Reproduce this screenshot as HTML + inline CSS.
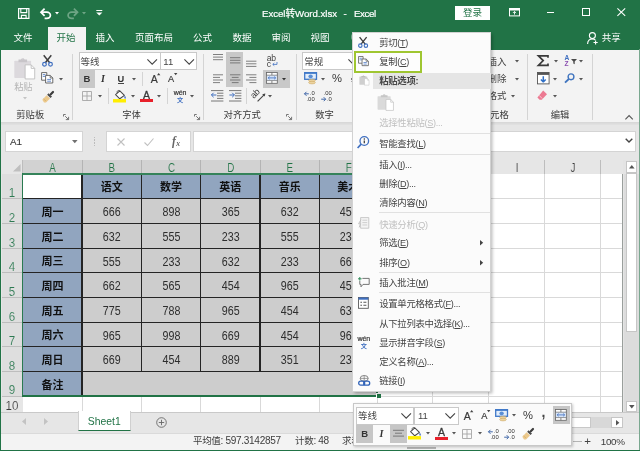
<!DOCTYPE html>
<html lang="zh-CN"><head><meta charset="utf-8"><title>Excel转Word.xlsx - Excel</title>
<style>
html,body{margin:0;padding:0;}
body{width:640px;height:451px;position:relative;overflow:hidden;background:#fff;font-family:"Liberation Sans","Noto Sans CJK SC",sans-serif;}
#app{position:absolute;left:0;top:0;width:640px;height:451px;overflow:hidden;will-change:transform;}
.t{position:absolute;white-space:nowrap;}
.b{position:absolute;box-sizing:border-box;}
.i{position:absolute;overflow:visible;}
u{text-decoration:underline;text-underline-offset:0.6px;text-decoration-thickness:0.7px;}
.clip{position:absolute;overflow:hidden;}
.si{font-family:'Liberation Serif',serif;font-style:italic;}
.sb{font-weight:bold;}
</style></head>
<body>
<div id="app">
<div class="b " style="left:0px;top:0px;width:640px;height:49.5px;background:#217346;"></div>
<div class="b " style="left:0px;top:49.5px;width:640px;height:73.5px;background:#f3f3f3;"></div>
<div class="b " style="left:0px;top:123px;width:640px;height:37px;background:#e6e6e6;"></div>
<div class="b " style="left:0px;top:121.6px;width:640px;height:3px;background:linear-gradient(#d6d6d6,#e2e2e2);"></div>
<div class="b " style="left:0px;top:160px;width:640px;height:252px;background:#e6e6e6;"></div>
<div class="b " style="left:0px;top:412px;width:640px;height:21px;background:#e6e6e6;"></div>
<div class="b " style="left:0px;top:433px;width:640px;height:18px;background:#f3f3f3;"></div>
<div class="b " style="left:0px;top:433px;width:640px;height:1px;background:#dadada;"></div>
<div class="t " style="left:262px;top:5.6px;font-size:9.7px;line-height:15px;height:15px;color:#fff;letter-spacing:-0.05px;-webkit-text-stroke:0.2px #fff;">Excel转Word.xlsx</div>
<div class="t " style="left:343.6px;top:5.6px;font-size:9.7px;line-height:15px;height:15px;color:#fff;-webkit-text-stroke:0.2px #fff;">-</div>
<div class="t " style="left:354px;top:5.6px;font-size:9.7px;line-height:15px;height:15px;color:#fff;letter-spacing:-0.4px;-webkit-text-stroke:0.2px #fff;">Excel</div>
<div class="b " style="left:455px;top:5.5px;width:35px;height:14.5px;background:#fff;"></div>
<div class="t " style="left:455px;top:5.7px;font-size:9.5px;line-height:14.5px;height:14.5px;color:#217346;width:35px;text-align:center;">登录</div>
<svg class="i" style="left:17.5px;top:8px;" width="11.5" height="11" viewBox="0 0 11.5 11"><path d="M0.6 0.6h10.3v9.8h-10.3z" fill="none" stroke="#fff" stroke-width="1.2"/><path d="M2.8 0.6v4h5.9v-4" fill="none" stroke="#fff" stroke-width="1.1"/><path d="M3.4 10.4v-3h4.7v3" fill="none" stroke="#fff" stroke-width="1.1"/></svg>
<svg class="i" style="left:40px;top:8px;" width="11.5" height="10.6" viewBox="0 0 11.5 10.6"><path d="M1.2 4.2h5.6a3.6 3.1 0 0 1 0 6.2h-2.2" fill="none" stroke="#fff" stroke-width="1.75"/><path d="M4.6 0.6l-3.6 3.6l3.6 3.6" fill="none" stroke="#fff" stroke-width="1.75"/></svg>
<svg class="i" style="left:55px;top:12.3px;" width="4" height="2.4" viewBox="0 0 4 2.4"><path d="M0 0h4l-2 2.4z" fill="#fff"/></svg>
<svg class="i" style="left:67px;top:8px;" width="11.5" height="10.6" viewBox="0 0 11.5 10.6"><path d="M10.3 4.2h-5.6a3.6 3.1 0 0 0 0 6.2h2.2" fill="none" stroke="#6ea585" stroke-width="1.75"/><path d="M6.9 0.6l3.6 3.6l-3.6 3.6" fill="none" stroke="#6ea585" stroke-width="1.75"/></svg>
<svg class="i" style="left:82.2px;top:12.3px;" width="4" height="2.4" viewBox="0 0 4 2.4"><path d="M0 0h4l-2 2.4z" fill="#6ea585"/></svg>
<svg class="i" style="left:96px;top:10.4px;" width="6.6" height="5.6" viewBox="0 0 6.6 5.6"><path d="M0.3 0.5h6" stroke="#fff" stroke-width="1"/><path d="M0.2 2.4h6.2l-3.1 3.2z" fill="#fff"/></svg>
<svg class="i" style="left:509.2px;top:8.2px;" width="11" height="8.4" viewBox="0 0 11 8.4"><rect x="0.5" y="0.5" width="10" height="7.4" fill="none" stroke="#fff" stroke-width="1"/><rect x="0.5" y="0.5" width="10" height="2" fill="#fff"/><path d="M5.5 3.6v3M5.5 3.4l-1.6 1.6M5.5 3.4l1.6 1.6" stroke="#fff" stroke-width="0.9" fill="none"/></svg>
<div class="b " style="left:547px;top:12.2px;width:7.4px;height:1.1px;background:#fff;"></div>
<div class="b " style="left:582px;top:8.2px;width:8.3px;height:8.3px;border:1.1px solid #fff;"></div>
<svg class="i" style="left:617px;top:8.4px;" width="8.6" height="8.2" viewBox="0 0 8.6 8.2"><path d="M0.4 0.4l7.8 7.4M8.2 0.4l-7.8 7.4" stroke="#fff" stroke-width="1.1"/></svg>
<svg class="i" style="left:587px;top:32.2px;" width="11" height="13" viewBox="0 0 11 13"><circle cx="5.4" cy="3.6" r="3" fill="none" stroke="#fff" stroke-width="1.1"/><path d="M0.6 12c0-3.4 2-5 4.8-5c1.2 0 2.2 0.4 3 1" fill="none" stroke="#fff" stroke-width="1.1"/><path d="M8.6 8.4v4.2M6.5 10.5h4.2" stroke="#fff" stroke-width="1.1"/></svg>
<div class="b " style="left:47.8px;top:26.8px;width:38px;height:23px;background:#f3f3f3;"></div>
<div class="t " style="left:-7px;top:30.2px;font-size:9.5px;line-height:15px;height:15px;color:#fff;width:60px;text-align:center;">文件</div>
<div class="t " style="left:36px;top:30.2px;font-size:9.5px;line-height:15px;height:15px;color:#217346;width:60px;text-align:center;">开始</div>
<div class="t " style="left:75px;top:30.2px;font-size:9.5px;line-height:15px;height:15px;color:#fff;width:60px;text-align:center;">插入</div>
<div class="t " style="left:124px;top:30.2px;font-size:9.5px;line-height:15px;height:15px;color:#fff;width:60px;text-align:center;">页面布局</div>
<div class="t " style="left:172.5px;top:30.2px;font-size:9.5px;line-height:15px;height:15px;color:#fff;width:60px;text-align:center;">公式</div>
<div class="t " style="left:212px;top:30.2px;font-size:9.5px;line-height:15px;height:15px;color:#fff;width:60px;text-align:center;">数据</div>
<div class="t " style="left:251px;top:30.2px;font-size:9.5px;line-height:15px;height:15px;color:#fff;width:60px;text-align:center;">审阅</div>
<div class="t " style="left:290px;top:30.2px;font-size:9.5px;line-height:15px;height:15px;color:#fff;width:60px;text-align:center;">视图</div>
<div class="b " style="left:350.6px;top:34px;width:2.4px;height:6px;background:rgba(255,255,255,0.35);border-radius:2px 0 0 2px;"></div>
<div class="t " style="left:601.8px;top:30.2px;font-size:9.5px;line-height:15px;height:15px;color:#fff;">共享</div>
<svg class="i" style="left:14px;top:55px;" width="21" height="26" viewBox="0 0 21.5 26"><rect x="0.3" y="5.6" width="17.2" height="17.6" rx="0.8" fill="#dcd9dd"/><path d="M4.6 7v-2.6h2.6a1.9 1.9 0 0 1 3.6 0h2.6v2.6z" fill="#c8c5c9"/><circle cx="9" cy="3.6" r="0.8" fill="#dcd9dd"/><path d="M11.4 9.8h6.2l3.6 3.6v10.8h-9.8z" fill="#fff" stroke="#bdbdbd" stroke-width="0.9"/><path d="M17.6 9.8v3.6h3.6" fill="none" stroke="#bdbdbd" stroke-width="0.9"/></svg>
<div class="t " style="left:14.2px;top:80.9px;font-size:9.2px;line-height:12px;height:12px;color:#b6b6b6;">粘贴</div>
<svg class="i" style="left:22.5px;top:96.5px;" width="4" height="2.4" viewBox="0 0 4 2.4"><path d="M0 0h4l-2 2.4z" fill="#c4c4c4"/></svg>
<svg class="i" style="left:42.3px;top:54.8px;" width="11" height="11.5" viewBox="0 0 11 11.5"><path d="M1.7 0.2L7.9 8.0M9.3 0.2L3.1 8.0" stroke="#3c3c3c" stroke-width="1.45" fill="none"/><circle cx="2.5" cy="9.3" r="1.85" fill="none" stroke="#3f6fc0" stroke-width="1.2"/><circle cx="8.5" cy="9.3" r="1.85" fill="none" stroke="#3f6fc0" stroke-width="1.2"/></svg>
<svg class="i" style="left:41px;top:72.4px;" width="12.5" height="11.5" viewBox="0 0 12.5 11.5"><path d="M0.6 0.6h5.2v7.6h-5.2z" fill="#fff" stroke="#5a5a5a" stroke-width="0.9"/><path d="M1.8 2.6h2.6M1.8 4.4h2.6" stroke="#3f6fc0" stroke-width="0.8"/><path d="M4.6 3.4h4.6l2.6 2.6v5h-7.2z" fill="#fff" stroke="#5a5a5a" stroke-width="0.9"/><path d="M9.2 3.4v2.6h2.6" fill="none" stroke="#5a5a5a" stroke-width="0.8"/><path d="M6.2 7.4h3.8M6.2 9.2h3.8" stroke="#3f6fc0" stroke-width="0.8"/></svg>
<svg class="i" style="left:58.6px;top:77.6px;" width="4" height="2.4" viewBox="0 0 4 2.4"><path d="M0 0h4l-2 2.4z" fill="#555"/></svg>
<svg class="i" style="left:42.3px;top:90.6px;" width="12" height="11.5" viewBox="0 0 12 11.5"><path d="M11 1l-2.2 2.2" stroke="#3c3c3c" stroke-width="2.2" stroke-linecap="round"/><path d="M6.6 2.2l3.4 3.4l-1.5 1.5l-3.4-3.4z" fill="#4a4a4a"/><path d="M4.6 4.2l3.4 3.4l-4 3.8h-2l-1.7-2.6z" fill="#ecc98c"/><path d="M2.4 8.6l1.5 1.5M1.5 7.6l0.8 0.8" stroke="#c9a15a" stroke-width="0.6"/></svg>
<div class="t " style="left:16.3px;top:109.2px;font-size:9.3px;line-height:12px;height:12px;color:#3a3a3a;">剪贴板</div>
<svg class="i" style="left:63px;top:113.5px;" width="6.5" height="6" viewBox="0 0 6.5 6"><path d="M0.5 2.5v-2h2.2M2.2 2.2l3.3 3.3M5.6 2.8v2.8h-2.8" stroke="#666" stroke-width="0.9" fill="none"/></svg>
<div class="b " style="left:71.5px;top:54px;width:1px;height:65.5px;background:#d4d4d4;"></div>
<div class="b " style="left:78.5px;top:52px;width:82px;height:17.5px;background:#fff;border:1px solid #c9c9c9;"></div>
<div class="b " style="left:160px;top:52px;width:37px;height:17.5px;background:#fff;border:1px solid #c9c9c9;"></div>
<div class="t " style="left:80.5px;top:56px;font-size:9.5px;line-height:12px;height:12px;color:#444;">等线</div>
<svg class="i" style="left:146.8px;top:58.8px;" width="10.4" height="5.6" viewBox="0 0 10.4 5.6"><path d="M0.4 0.4l4.8 4.8l4.8 -4.8" stroke="#444" stroke-width="1.1" fill="none"/></svg>
<div class="t " style="left:163.3px;top:56px;font-size:9.5px;line-height:12px;height:12px;color:#444;">11</div>
<svg class="i" style="left:184.3px;top:58.8px;" width="10.4" height="5.6" viewBox="0 0 10.4 5.6"><path d="M0.4 0.4l4.8 4.8l4.8 -4.8" stroke="#444" stroke-width="1.1" fill="none"/></svg>
<div class="b " style="left:78.8px;top:69.5px;width:16.4px;height:18px;background:#c8c8c8;"></div>
<div class="t " style="left:78.8px;top:72.5px;font-size:9.5px;line-height:12px;height:12px;color:#333;width:16.4px;text-align:center;font-weight:bold;">B</div>
<div class="t si sb" style="left:96px;top:72.5px;font-size:10px;line-height:12px;height:12px;color:#333;width:14px;text-align:center;">I</div>
<div class="t " style="left:113.8px;top:72.5px;font-size:9.3px;line-height:12px;height:12px;color:#333;width:14px;text-align:center;font-weight:bold;">U</div>
<div class="b " style="left:118px;top:82.6px;width:5.8px;height:0.9px;background:#444;"></div>
<svg class="i" style="left:132.2px;top:77.6px;" width="4" height="2.4" viewBox="0 0 4 2.4"><path d="M0 0h4l-2 2.4z" fill="#555"/></svg>
<div class="b " style="left:141.8px;top:72px;width:1px;height:14px;background:#d4d4d4;"></div>
<div class="t " style="left:150.8px;top:73.8px;font-size:10.5px;line-height:10px;height:10px;color:#3a3a3a;-webkit-text-stroke:0.2px #3a3a3a;">A</div>
<svg class="i" style="left:157px;top:73.2px;" width="3.4" height="2.2" viewBox="0 0 3.4 2.2"><path d="M0 2.2h3.4l-1.7-2.2z" fill="#444"/></svg>
<div class="t " style="left:168px;top:75.4px;font-size:9.2px;line-height:9px;height:9px;color:#3a3a3a;-webkit-text-stroke:0.2px #3a3a3a;">A</div>
<svg class="i" style="left:173.8px;top:73px;" width="3.4" height="2.2" viewBox="0 0 3.4 2.2"><path d="M0 0h3.4l-1.7 2.2z" fill="#444"/></svg>
<svg class="i" style="left:82px;top:91px;" width="10" height="10" viewBox="0 0 10 10"><path d="M0.5 0.5h9v9h-9zM5 0.5v9M0.5 5h9" stroke="#a6a6a6" stroke-width="0.9" fill="none"/></svg>
<svg class="i" style="left:97.8px;top:95.4px;" width="4" height="2.4" viewBox="0 0 4 2.4"><path d="M0 0h4l-2 2.4z" fill="#555"/></svg>
<div class="b " style="left:107.8px;top:88px;width:1px;height:16px;background:#d4d4d4;"></div>
<svg class="i" style="left:113.3px;top:90px;" width="13" height="12.6" viewBox="0 0 13 12.6"><path d="M2.6 4.6l4.2-3.8l4.6 4.6l-4.6 3.4z" fill="#fff" stroke="#484848" stroke-width="1.05" stroke-linejoin="round"/><path d="M4.4 3.0c-0.9-2.0 1.0-3.4 2.6-1.8" fill="none" stroke="#484848" stroke-width="0.9"/><path d="M11.7 5.6c1.2 1.5 1.5 2.6 0.7 3.1c-0.9 0.4-1.5-0.7-0.7-3.1z" fill="#3f6fc0"/><rect x="0" y="9.1" width="13" height="3.4" fill="#ffee00"/></svg>
<svg class="i" style="left:131.4px;top:95.4px;" width="4" height="2.4" viewBox="0 0 4 2.4"><path d="M0 0h4l-2 2.4z" fill="#555"/></svg>
<div class="t " style="left:142.9px;top:90px;font-size:10.5px;line-height:10px;height:10px;color:#3a3a3a;-webkit-text-stroke:0.3px #3a3a3a;">A</div>
<div class="b " style="left:140px;top:99.2px;width:12.6px;height:3.2px;background:#e8202a;"></div>
<svg class="i" style="left:157.4px;top:95.4px;" width="4" height="2.4" viewBox="0 0 4 2.4"><path d="M0 0h4l-2 2.4z" fill="#555"/></svg>
<div class="b " style="left:167px;top:88px;width:1px;height:16px;background:#d4d4d4;"></div>
<div class="t " style="left:173.8px;top:89px;font-size:7px;line-height:8px;height:8px;color:#333;width:12.5px;text-align:center;-webkit-text-stroke:0.2px #333;letter-spacing:-0.1px;">wén</div>
<div class="t " style="left:173.8px;top:96px;font-size:6.2px;line-height:8px;height:8px;color:#3f6fc0;width:12.5px;text-align:center;font-weight:bold;">文</div>
<svg class="i" style="left:190.3px;top:95.4px;" width="4" height="2.4" viewBox="0 0 4 2.4"><path d="M0 0h4l-2 2.4z" fill="#555"/></svg>
<div class="t " style="left:122.3px;top:109.2px;font-size:9.3px;line-height:12px;height:12px;color:#3a3a3a;">字体</div>
<svg class="i" style="left:194px;top:113.5px;" width="6.5" height="6" viewBox="0 0 6.5 6"><path d="M0.5 2.5v-2h2.2M2.2 2.2l3.3 3.3M5.6 2.8v2.8h-2.8" stroke="#666" stroke-width="0.9" fill="none"/></svg>
<div class="b " style="left:202.5px;top:54px;width:1px;height:65.5px;background:#d4d4d4;"></div>
<div class="b " style="left:226.4px;top:52.4px;width:16.8px;height:35.1px;background:#c8c8c8;"></div>
<div class="b " style="left:262.8px;top:70px;width:26.8px;height:17.5px;background:#c8c8c8;"></div>
<svg class="i" style="left:212.8px;top:50px;" width="14" height="14" viewBox="0 0 14 14"><path d="M0 4.5h10M0 7.1h10M0 9.7h10" stroke="#6a6a6a" stroke-width="0.85" fill="none"/></svg>
<svg class="i" style="left:229.6px;top:50px;" width="14" height="14" viewBox="0 0 14 14"><path d="M0 7.7h10.4M0 10.3h10.4M0 12.9h10.4" stroke="#6a6a6a" stroke-width="0.85" fill="none"/></svg>
<svg class="i" style="left:246.4px;top:54px;" width="14" height="14" viewBox="0 0 14 14"><path d="M0 7.2h10.4M0 9.8h10.4M0 12.4h10.4" stroke="#6a6a6a" stroke-width="0.85" fill="none"/></svg>
<svg class="i" style="left:212.8px;top:70px;" width="14" height="14" viewBox="0 0 14 14"><path d="M0 4.8h10M0 7.4h7M0 10h10M0 12.6h7" stroke="#6a6a6a" stroke-width="0.85" fill="none"/></svg>
<svg class="i" style="left:229.6px;top:70px;" width="14" height="14" viewBox="0 0 14 14"><path d="M0 4.8h10.4M1.8 7.4h6.8M0 10h10.4M1.8 12.6h6.8" stroke="#6a6a6a" stroke-width="0.85" fill="none"/></svg>
<svg class="i" style="left:246.4px;top:70px;" width="14" height="14" viewBox="0 0 14 14"><path d="M0 4.8h10.4M3.4 7.4h7M0 10h10.4M3.4 12.6h7" stroke="#6a6a6a" stroke-width="0.85" fill="none"/></svg>
<div class="t " style="left:266.8px;top:54.2px;font-size:8.6px;line-height:8px;height:8px;color:#444;letter-spacing:-0.3px;">ab</div>
<div class="t " style="left:266.8px;top:59.8px;font-size:8.6px;line-height:8px;height:8px;color:#444;">c</div>
<svg class="i" style="left:271.6px;top:62.2px;" width="5.4" height="4.2" viewBox="0 0 5.4 4.2"><path d="M5 0v2.4h-4.2M0.8 2.4l1.5-1.4M0.8 2.4l1.5 1.4" stroke="#3f6fc0" stroke-width="0.8" fill="none"/></svg>
<svg class="i" style="left:265.5px;top:72.2px;" width="11.8" height="11.8" viewBox="0 0 11.8 11.8"><rect x="0.5" y="0.5" width="10.8" height="10.8" fill="#fff" stroke="#686868" stroke-width="0.85"/><path d="M5.9 0.5v2.6M5.9 8.7v2.6" stroke="#686868" stroke-width="0.8"/><rect x="0.9" y="3.3" width="10" height="5.2" fill="#d6e4f7"/><path d="M0.5 3.2h10.8M0.5 8.6h10.8" stroke="#686868" stroke-width="0.7"/><path d="M2.2 5.9h7.4M2.2 5.9l1.4-1.3M2.2 5.9l1.4 1.3M9.6 5.9l-1.4-1.3M9.6 5.9l-1.4 1.3" stroke="#3f6fc0" stroke-width="0.8" fill="none"/></svg>
<svg class="i" style="left:281.9px;top:77.6px;" width="4" height="2.4" viewBox="0 0 4 2.4"><path d="M0 0h4l-2 2.4z" fill="#333"/></svg>
<svg class="i" style="left:211.4px;top:86px;" width="14" height="14" viewBox="0 0 14 14"><path d="M0 4.6h12.4M6 7.2h6.4M6 9.8h6.4M6 12.4h6.4M0 15h12.4" stroke="#6a6a6a" stroke-width="0.9" fill="none"/></svg>
<svg class="i" style="left:211.4px;top:92px;" width="6" height="6" viewBox="0 0 6 6"><path d="M0.4 3h5M0.4 3l2.2-2.2M0.4 3l2.2 2.2" stroke="#3f6fc0" stroke-width="1" fill="none"/></svg>
<svg class="i" style="left:228.6px;top:86px;" width="14" height="14" viewBox="0 0 14 14"><path d="M0 4.6h12.4M6 7.2h6.4M6 9.8h6.4M6 12.4h6.4M0 15h12.4" stroke="#6a6a6a" stroke-width="0.9" fill="none"/></svg>
<svg class="i" style="left:228.6px;top:92px;" width="6" height="6" viewBox="0 0 6 6"><path d="M0.4 3h5M5.4 3l-2.2-2.2M5.4 3l-2.2 2.2" stroke="#3f6fc0" stroke-width="1" fill="none"/></svg>
<div class="b " style="left:246.3px;top:88px;width:1px;height:16px;background:#d4d4d4;"></div>
<div class="t" style="left:252.2px;top:89.4px;font-size:9px;line-height:9px;color:#3a3a3a;transform:rotate(-45deg);transform-origin:4.5px 6.5px;letter-spacing:-0.3px;">ab</div>
<svg class="i" style="left:257.4px;top:93.2px;" width="9" height="9" viewBox="0 0 9 9"><path d="M0.6 8.4l7.2-7.2" stroke="#444" stroke-width="1.1" fill="none"/><path d="M8.4 0.4l-3.2 0.8l2.4 2.4z" fill="#444"/></svg>
<svg class="i" style="left:268px;top:95.4px;" width="4" height="2.4" viewBox="0 0 4 2.4"><path d="M0 0h4l-2 2.4z" fill="#555"/></svg>
<div class="t " style="left:223.6px;top:109.2px;font-size:9.3px;line-height:12px;height:12px;color:#3a3a3a;">对齐方式</div>
<svg class="i" style="left:286.3px;top:113.5px;" width="6.5" height="6" viewBox="0 0 6.5 6"><path d="M0.5 2.5v-2h2.2M2.2 2.2l3.3 3.3M5.6 2.8v2.8h-2.8" stroke="#666" stroke-width="0.9" fill="none"/></svg>
<div class="b " style="left:295.5px;top:54px;width:1px;height:65.5px;background:#d4d4d4;"></div>
<div class="b " style="left:302px;top:52px;width:70px;height:17.5px;background:#fff;border:1px solid #c9c9c9;"></div>
<div class="t " style="left:304.3px;top:56px;font-size:9.5px;line-height:12px;height:12px;color:#444;">常规</div>
<svg class="i" style="left:348.3px;top:58.8px;" width="10.4" height="5.6" viewBox="0 0 10.4 5.6"><path d="M0.4 0.4l4.8 4.8l4.8 -4.8" stroke="#444" stroke-width="1.1" fill="none"/></svg>
<svg class="i" style="left:304px;top:72px;" width="13.2" height="12.3" viewBox="0 0 13.2 12.3"><rect x="0.7" y="0.7" width="11.8" height="6.6" fill="#e3eefb" stroke="#3f78c8" stroke-width="1.3"/><rect x="0.2" y="0.2" width="12.8" height="1.6" fill="#3f78c8"/><ellipse cx="6.6" cy="4.4" rx="2.2" ry="1.8" fill="#5a8fd6"/><ellipse cx="8" cy="8.6" rx="3.4" ry="1.3" fill="#ecd3a0" stroke="#c9a15a" stroke-width="0.5"/><ellipse cx="8" cy="10.6" rx="3.4" ry="1.3" fill="#ecd3a0" stroke="#c9a15a" stroke-width="0.5"/></svg>
<svg class="i" style="left:321.4px;top:77.6px;" width="4" height="2.4" viewBox="0 0 4 2.4"><path d="M0 0h4l-2 2.4z" fill="#555"/></svg>
<div class="t " style="left:332px;top:72px;font-size:11.2px;line-height:12px;height:12px;color:#383838;">%</div>
<div class="t " style="left:350.4px;top:70px;font-size:12px;line-height:12px;height:12px;color:#444;font-weight:bold;">,</div>
<svg class="i" style="left:304.4px;top:90.6px;" width="11.4" height="10.6" viewBox="0 0 11.4 10.6"><path d="M0.4 2.8h4.4M0.5 2.8l2-2M0.5 2.8l2 2" stroke="#3f66a8" stroke-width="1.0" fill="none"/><text x="5.8" y="4.3" font-size="5.9" fill="#2e2e2e" style="font-family:&quot;Liberation Sans&quot;,sans-serif">.0</text><text x="2.5" y="10.2" font-size="5.9" fill="#2e2e2e" style="font-family:&quot;Liberation Sans&quot;,sans-serif">.00</text></svg>
<svg class="i" style="left:321.2px;top:90.6px;" width="11.4" height="10.6" viewBox="0 0 11.4 10.6"><text x="2.7" y="4.3" font-size="5.9" fill="#2e2e2e" style="font-family:&quot;Liberation Sans&quot;,sans-serif">.00</text><path d="M0.2 8.2h4.4M4.7 8.2l-2-2M4.7 8.2l-2 2" stroke="#3f66a8" stroke-width="1.0" fill="none"/><text x="6" y="10.2" font-size="5.9" fill="#2e2e2e" style="font-family:&quot;Liberation Sans&quot;,sans-serif">.0</text></svg>
<div class="t " style="left:315.2px;top:109.2px;font-size:9.3px;line-height:12px;height:12px;color:#3a3a3a;">数字</div>
<div class="t " style="left:487.5px;top:55.6px;font-size:9.5px;line-height:12px;height:12px;color:#444;">插入</div>
<svg class="i" style="left:514.6px;top:60.2px;" width="4" height="2.4" viewBox="0 0 4 2.4"><path d="M0 0h4l-2 2.4z" fill="#555"/></svg>
<div class="t " style="left:487.5px;top:73px;font-size:9.5px;line-height:12px;height:12px;color:#444;">删除</div>
<svg class="i" style="left:514.6px;top:77.6px;" width="4" height="2.4" viewBox="0 0 4 2.4"><path d="M0 0h4l-2 2.4z" fill="#555"/></svg>
<div class="t " style="left:487.5px;top:90.4px;font-size:9.5px;line-height:12px;height:12px;color:#444;">格式</div>
<svg class="i" style="left:510.6px;top:95.4px;" width="4" height="2.4" viewBox="0 0 4 2.4"><path d="M0 0h4l-2 2.4z" fill="#555"/></svg>
<div class="t " style="left:481px;top:109.2px;font-size:9.3px;line-height:12px;height:12px;color:#3a3a3a;">单元格</div>
<div class="b " style="left:526.7px;top:54px;width:1px;height:65.5px;background:#d4d4d4;"></div>
<svg class="i" style="left:536.7px;top:55.2px;" width="12" height="11" viewBox="0 0 12 11"><path d="M11 2.8v-2h-9.6l4.8 4.8l-4.8 4.8h9.6v-2" stroke="#3a3a3a" stroke-width="1.7" fill="none" stroke-linejoin="miter"/></svg>
<svg class="i" style="left:554px;top:60.2px;" width="4" height="2.4" viewBox="0 0 4 2.4"><path d="M0 0h4l-2 2.4z" fill="#555"/></svg>
<div class="t " style="left:564.4px;top:53.6px;font-size:6.6px;line-height:7px;height:7px;color:#3f6fc0;font-weight:bold;">A</div>
<div class="t " style="left:564.6px;top:60.4px;font-size:6.6px;line-height:7px;height:7px;color:#8a4fb0;font-weight:bold;">Z</div>
<svg class="i" style="left:570.8px;top:58.8px;" width="6" height="5.4" viewBox="0 0 6 5.4"><path d="M0 0h6l-2.3 2.4v2.9l-1.4-0.8v-2.1z" fill="#4a4a4a"/></svg>
<svg class="i" style="left:579.2px;top:60.2px;" width="4" height="2.4" viewBox="0 0 4 2.4"><path d="M0 0h4l-2 2.4z" fill="#555"/></svg>
<svg class="i" style="left:536.7px;top:72px;" width="12.6" height="12.4" viewBox="0 0 12.6 12.4"><rect x="0.5" y="0.5" width="11.6" height="11.4" fill="#fff" stroke="#555" stroke-width="0.9"/><rect x="0.5" y="0.5" width="11.6" height="2.4" fill="#555"/><path d="M6.3 4.2v5.6M6.3 10l-2.4-2.4M6.3 10l2.4-2.4" stroke="#2f6fc6" stroke-width="1.5" fill="none"/></svg>
<svg class="i" style="left:552.6px;top:77.6px;" width="4" height="2.4" viewBox="0 0 4 2.4"><path d="M0 0h4l-2 2.4z" fill="#555"/></svg>
<svg class="i" style="left:564.4px;top:73.2px;" width="11" height="10.4" viewBox="0 0 11 10.4"><circle cx="7" cy="3.8" r="2.9" fill="none" stroke="#3f74bf" stroke-width="1.4"/><path d="M4.8 6l-3.8 3.6" stroke="#3f74bf" stroke-width="1.8"/></svg>
<svg class="i" style="left:579.4px;top:77.6px;" width="4" height="2.4" viewBox="0 0 4 2.4"><path d="M0 0h4l-2 2.4z" fill="#555"/></svg>
<svg class="i" style="left:537.4px;top:90.4px;" width="10.4" height="10.4" viewBox="0 0 10.4 10.4"><path d="M6.2 0.4l3.8 3.8l-5.2 5.6h-2.2l-2.2-2.4z" fill="#ec7a92"/><path d="M2.2 5.4l3 3.2" stroke="#f6c6d0" stroke-width="1"/></svg>
<svg class="i" style="left:552.6px;top:95.4px;" width="4" height="2.4" viewBox="0 0 4 2.4"><path d="M0 0h4l-2 2.4z" fill="#555"/></svg>
<div class="t " style="left:550.8px;top:109.2px;font-size:9.3px;line-height:12px;height:12px;color:#3a3a3a;">编辑</div>
<div class="b " style="left:592px;top:54px;width:1px;height:65.5px;background:#d4d4d4;"></div>
<svg class="i" style="left:625.3px;top:114.6px;" width="8.2" height="4.8" viewBox="0 0 8.2 4.8"><path d="M0.4 4.4l3.7-3.8l3.7 3.8" stroke="#555" stroke-width="1.1" fill="none"/></svg>
<div class="b " style="left:5px;top:130.8px;width:78.4px;height:21.4px;background:#fff;border:1px solid #d4d4d4;"></div>
<div class="t " style="left:10px;top:133.7px;font-size:9.9px;line-height:15px;height:15px;color:#3a3a3a;-webkit-text-stroke:0.15px #3a3a3a;">A1</div>
<svg class="i" style="left:72.2px;top:139.6px;" width="5.6" height="3.4" viewBox="0 0 5.6 3.4"><path d="M0 0h5.6l-2.8 3.2z" fill="#707070"/></svg>
<div class="b " style="left:93.8px;top:136.6px;width:1.4px;height:1.4px;background:#bcbcbc;"></div>
<div class="b " style="left:93.8px;top:139.4px;width:1.4px;height:1.4px;background:#bcbcbc;"></div>
<div class="b " style="left:93.8px;top:142.2px;width:1.4px;height:1.4px;background:#bcbcbc;"></div>
<div class="b " style="left:93.8px;top:145px;width:1.4px;height:1.4px;background:#bcbcbc;"></div>
<div class="b " style="left:106px;top:130.8px;width:85px;height:21.4px;background:#fff;border:1px solid #d4d4d4;"></div>
<svg class="i" style="left:117px;top:138px;" width="8" height="8" viewBox="0 0 8 8"><path d="M0.5 0.5l7 7M7.5 0.5l-7 7" stroke="#c0c0c0" stroke-width="1.1" fill="none"/></svg>
<svg class="i" style="left:144px;top:138px;" width="10" height="8" viewBox="0 0 10 8"><path d="M0.5 4.5l3 3l6-7" stroke="#c0c0c0" stroke-width="1.1" fill="none"/></svg>
<div class="t si sb" style="left:172px;top:133.6px;font-size:11.6px;line-height:16px;height:16px;color:#666;">f</div>
<div class="t si sb" style="left:176.2px;top:137.8px;font-size:7.6px;line-height:11px;height:11px;color:#666;">x</div>
<div class="b " style="left:193.2px;top:130.8px;width:443px;height:21.4px;background:#fff;border:1px solid #d4d4d4;"></div>
<svg class="i" style="left:625px;top:138px;" width="8" height="5" viewBox="0 0 8 5"><path d="M0.7 0.7l3.3 3.3l3.3-3.3" stroke="#444" stroke-width="1.4" fill="none"/></svg>
<div class="b " style="left:2px;top:174px;width:621px;height:238px;background:#fff;"></div>
<div class="b " style="left:2px;top:160px;width:621px;height:14px;background:#e6e6e6;"></div>
<div class="b " style="left:22px;top:160px;width:355px;height:14px;background:#d2d2d2;"></div>
<div class="t " style="left:23px;top:160.8px;font-size:12px;line-height:15px;height:15px;color:#217346;width:59px;text-align:center;transform:scaleX(0.82);-webkit-text-stroke:0.15px #d2d2d2;">A</div>
<div class="b " style="left:81.5px;top:160px;width:1px;height:14px;background:#b4b4b4;"></div>
<div class="t " style="left:82px;top:160.8px;font-size:12px;line-height:15px;height:15px;color:#217346;width:59.5px;text-align:center;transform:scaleX(0.82);-webkit-text-stroke:0.15px #d2d2d2;">B</div>
<div class="b " style="left:141px;top:160px;width:1px;height:14px;background:#b4b4b4;"></div>
<div class="t " style="left:141.5px;top:160.8px;font-size:12px;line-height:15px;height:15px;color:#217346;width:59px;text-align:center;transform:scaleX(0.82);-webkit-text-stroke:0.15px #d2d2d2;">C</div>
<div class="b " style="left:200px;top:160px;width:1px;height:14px;background:#b4b4b4;"></div>
<div class="t " style="left:200.5px;top:160.8px;font-size:12px;line-height:15px;height:15px;color:#217346;width:59.5px;text-align:center;transform:scaleX(0.82);-webkit-text-stroke:0.15px #d2d2d2;">D</div>
<div class="b " style="left:259.5px;top:160px;width:1px;height:14px;background:#b4b4b4;"></div>
<div class="t " style="left:260px;top:160.8px;font-size:12px;line-height:15px;height:15px;color:#217346;width:59.5px;text-align:center;transform:scaleX(0.82);-webkit-text-stroke:0.15px #d2d2d2;">E</div>
<div class="b " style="left:319px;top:160px;width:1px;height:14px;background:#b4b4b4;"></div>
<div class="t " style="left:319.5px;top:160.8px;font-size:12px;line-height:15px;height:15px;color:#217346;width:57.5px;text-align:center;transform:scaleX(0.82);-webkit-text-stroke:0.15px #d2d2d2;">F</div>
<div class="b " style="left:376.5px;top:160px;width:1px;height:14px;background:#bdbdbd;"></div>
<div class="t " style="left:377px;top:160.8px;font-size:12px;line-height:15px;height:15px;color:#3a3a3a;width:55.5px;text-align:center;transform:scaleX(0.82);-webkit-text-stroke:0.15px #e6e6e6;">G</div>
<div class="b " style="left:432px;top:160px;width:1px;height:14px;background:#bdbdbd;"></div>
<div class="t " style="left:432.5px;top:160.8px;font-size:12px;line-height:15px;height:15px;color:#3a3a3a;width:56px;text-align:center;transform:scaleX(0.82);-webkit-text-stroke:0.15px #e6e6e6;">H</div>
<div class="b " style="left:488px;top:160px;width:1px;height:14px;background:#bdbdbd;"></div>
<div class="t " style="left:488.5px;top:160.8px;font-size:12px;line-height:15px;height:15px;color:#3a3a3a;width:56px;text-align:center;transform:scaleX(0.82);-webkit-text-stroke:0.15px #e6e6e6;">I</div>
<div class="b " style="left:544px;top:160px;width:1px;height:14px;background:#bdbdbd;"></div>
<div class="t " style="left:544.5px;top:160.8px;font-size:12px;line-height:15px;height:15px;color:#3a3a3a;width:56px;text-align:center;transform:scaleX(0.82);-webkit-text-stroke:0.15px #e6e6e6;">J</div>
<div class="b " style="left:600px;top:160px;width:1px;height:14px;background:#bdbdbd;"></div>
<div class="b " style="left:659.5px;top:160px;width:1px;height:14px;background:#bdbdbd;"></div>
<div class="b " style="left:21.5px;top:160px;width:1px;height:14px;background:#bdbdbd;"></div>
<svg class="i" style="left:12.6px;top:164px;" width="7.6" height="7.6" viewBox="0 0 7.6 7.6"><path d="M7.6 0v7.6h-7.6z" fill="#bfbfbf"/></svg>
<div class="b " style="left:2px;top:174px;width:20.5px;height:222px;background:#dedede;"></div>
<div class="b " style="left:2px;top:396px;width:20.5px;height:16px;background:#e6e6e6;"></div>
<div class="t " style="left:2px;top:186.1px;font-size:12.6px;line-height:15px;height:15px;color:#2d7a52;width:20px;text-align:center;transform:scaleX(0.92);-webkit-text-stroke:0.15px #dedede;">1</div>
<div class="b " style="left:2px;top:198.2px;width:20.5px;height:1px;background:#bdbdbd;"></div>
<div class="t " style="left:2px;top:210.8px;font-size:12.6px;line-height:15px;height:15px;color:#2d7a52;width:20px;text-align:center;transform:scaleX(0.92);-webkit-text-stroke:0.15px #dedede;">2</div>
<div class="b " style="left:2px;top:222.9px;width:20.5px;height:1px;background:#bdbdbd;"></div>
<div class="t " style="left:2px;top:235.5px;font-size:12.6px;line-height:15px;height:15px;color:#2d7a52;width:20px;text-align:center;transform:scaleX(0.92);-webkit-text-stroke:0.15px #dedede;">3</div>
<div class="b " style="left:2px;top:247.6px;width:20.5px;height:1px;background:#bdbdbd;"></div>
<div class="t " style="left:2px;top:260.2px;font-size:12.6px;line-height:15px;height:15px;color:#2d7a52;width:20px;text-align:center;transform:scaleX(0.92);-webkit-text-stroke:0.15px #dedede;">4</div>
<div class="b " style="left:2px;top:272.3px;width:20.5px;height:1px;background:#bdbdbd;"></div>
<div class="t " style="left:2px;top:284.9px;font-size:12.6px;line-height:15px;height:15px;color:#2d7a52;width:20px;text-align:center;transform:scaleX(0.92);-webkit-text-stroke:0.15px #dedede;">5</div>
<div class="b " style="left:2px;top:297px;width:20.5px;height:1px;background:#bdbdbd;"></div>
<div class="t " style="left:2px;top:309.6px;font-size:12.6px;line-height:15px;height:15px;color:#2d7a52;width:20px;text-align:center;transform:scaleX(0.92);-webkit-text-stroke:0.15px #dedede;">6</div>
<div class="b " style="left:2px;top:321.7px;width:20.5px;height:1px;background:#bdbdbd;"></div>
<div class="t " style="left:2px;top:334.3px;font-size:12.6px;line-height:15px;height:15px;color:#2d7a52;width:20px;text-align:center;transform:scaleX(0.92);-webkit-text-stroke:0.15px #dedede;">7</div>
<div class="b " style="left:2px;top:346.4px;width:20.5px;height:1px;background:#bdbdbd;"></div>
<div class="t " style="left:2px;top:359px;font-size:12.6px;line-height:15px;height:15px;color:#2d7a52;width:20px;text-align:center;transform:scaleX(0.92);-webkit-text-stroke:0.15px #dedede;">8</div>
<div class="b " style="left:2px;top:371.1px;width:20.5px;height:1px;background:#bdbdbd;"></div>
<div class="t " style="left:2px;top:383.4px;font-size:12.6px;line-height:15px;height:15px;color:#2d7a52;width:20px;text-align:center;transform:scaleX(0.92);-webkit-text-stroke:0.15px #dedede;">9</div>
<div class="b " style="left:2px;top:395.5px;width:20.5px;height:1px;background:#bdbdbd;"></div>
<div class="t " style="left:2px;top:399.4px;font-size:12.6px;line-height:15px;height:15px;color:#3a3a3a;width:20px;text-align:center;transform:scaleX(0.92);-webkit-text-stroke:0.15px #e6e6e6;">10</div>
<div class="b " style="left:2px;top:411.5px;width:20.5px;height:1px;background:#bdbdbd;"></div>
<div class="b " style="left:376.5px;top:174px;width:1px;height:238px;background:#d9d9d9;"></div>
<div class="b " style="left:432px;top:174px;width:1px;height:238px;background:#d9d9d9;"></div>
<div class="b " style="left:488px;top:174px;width:1px;height:238px;background:#d9d9d9;"></div>
<div class="b " style="left:544px;top:174px;width:1px;height:238px;background:#d9d9d9;"></div>
<div class="b " style="left:600px;top:174px;width:1px;height:238px;background:#d9d9d9;"></div>
<div class="b " style="left:81.5px;top:396px;width:1px;height:16px;background:#d9d9d9;"></div>
<div class="b " style="left:141px;top:396px;width:1px;height:16px;background:#d9d9d9;"></div>
<div class="b " style="left:200px;top:396px;width:1px;height:16px;background:#d9d9d9;"></div>
<div class="b " style="left:259.5px;top:396px;width:1px;height:16px;background:#d9d9d9;"></div>
<div class="b " style="left:319px;top:396px;width:1px;height:16px;background:#d9d9d9;"></div>
<div class="b " style="left:22px;top:198.2px;width:601px;height:1px;background:#d9d9d9;"></div>
<div class="b " style="left:22px;top:222.9px;width:601px;height:1px;background:#d9d9d9;"></div>
<div class="b " style="left:22px;top:247.6px;width:601px;height:1px;background:#d9d9d9;"></div>
<div class="b " style="left:22px;top:272.3px;width:601px;height:1px;background:#d9d9d9;"></div>
<div class="b " style="left:22px;top:297px;width:601px;height:1px;background:#d9d9d9;"></div>
<div class="b " style="left:22px;top:321.7px;width:601px;height:1px;background:#d9d9d9;"></div>
<div class="b " style="left:22px;top:346.4px;width:601px;height:1px;background:#d9d9d9;"></div>
<div class="b " style="left:22px;top:371.1px;width:601px;height:1px;background:#d9d9d9;"></div>
<div class="b " style="left:22px;top:395.5px;width:601px;height:1px;background:#d9d9d9;"></div>
<div class="b " style="left:22px;top:411.5px;width:601px;height:1px;background:#d9d9d9;"></div>
<div class="b " style="left:82px;top:174px;width:295px;height:24.7px;background:#91a5bf;"></div>
<div class="b " style="left:23px;top:198.7px;width:59px;height:197.3px;background:#91a5bf;"></div>
<div class="b " style="left:82px;top:198.7px;width:295px;height:197.3px;background:#cdcdcd;"></div>
<div class="b " style="left:23px;top:198.1px;width:354px;height:1.2px;background:#242424;"></div>
<div class="b " style="left:23px;top:222.8px;width:354px;height:1.2px;background:#242424;"></div>
<div class="b " style="left:23px;top:247.5px;width:354px;height:1.2px;background:#242424;"></div>
<div class="b " style="left:23px;top:272.2px;width:354px;height:1.2px;background:#242424;"></div>
<div class="b " style="left:23px;top:296.9px;width:354px;height:1.2px;background:#242424;"></div>
<div class="b " style="left:23px;top:321.6px;width:354px;height:1.2px;background:#242424;"></div>
<div class="b " style="left:23px;top:346.3px;width:354px;height:1.2px;background:#242424;"></div>
<div class="b " style="left:23px;top:371px;width:354px;height:1.2px;background:#242424;"></div>
<div class="b " style="left:81.4px;top:174px;width:1.2px;height:197.6px;background:#242424;"></div>
<div class="b " style="left:140.9px;top:174px;width:1.2px;height:197.6px;background:#242424;"></div>
<div class="b " style="left:199.9px;top:174px;width:1.2px;height:197.6px;background:#242424;"></div>
<div class="b " style="left:259.4px;top:174px;width:1.2px;height:197.6px;background:#242424;"></div>
<div class="b " style="left:318.9px;top:174px;width:1.2px;height:197.6px;background:#242424;"></div>
<div class="b " style="left:81.4px;top:371.6px;width:1.2px;height:24.4px;background:#242424;"></div>
<div class="t " style="left:82px;top:179.1px;font-size:11px;line-height:16px;height:16px;color:#111;width:59.5px;text-align:center;font-weight:bold;">语文</div>
<div class="t " style="left:141.5px;top:179.1px;font-size:11px;line-height:16px;height:16px;color:#111;width:59px;text-align:center;font-weight:bold;">数学</div>
<div class="t " style="left:200.5px;top:179.1px;font-size:11px;line-height:16px;height:16px;color:#111;width:59.5px;text-align:center;font-weight:bold;">英语</div>
<div class="t " style="left:260px;top:179.1px;font-size:11px;line-height:16px;height:16px;color:#111;width:59.5px;text-align:center;font-weight:bold;">音乐</div>
<div class="t " style="left:319.5px;top:179.1px;font-size:11px;line-height:16px;height:16px;color:#111;width:57.5px;text-align:center;font-weight:bold;">美术</div>
<div class="t " style="left:23px;top:203.8px;font-size:11px;line-height:16px;height:16px;color:#111;width:59px;text-align:center;font-weight:bold;">周一</div>
<div class="t " style="left:82px;top:204.1px;font-size:12.3px;line-height:16px;height:16px;color:#2e2e2e;width:59.5px;text-align:center;transform:scaleX(0.87);">666</div>
<div class="t " style="left:141.5px;top:204.1px;font-size:12.3px;line-height:16px;height:16px;color:#2e2e2e;width:59px;text-align:center;transform:scaleX(0.87);">898</div>
<div class="t " style="left:200.5px;top:204.1px;font-size:12.3px;line-height:16px;height:16px;color:#2e2e2e;width:59.5px;text-align:center;transform:scaleX(0.87);">365</div>
<div class="t " style="left:260px;top:204.1px;font-size:12.3px;line-height:16px;height:16px;color:#2e2e2e;width:59.5px;text-align:center;transform:scaleX(0.87);">632</div>
<div class="t " style="left:319.5px;top:204.1px;font-size:12.3px;line-height:16px;height:16px;color:#2e2e2e;width:57.5px;text-align:center;transform:scaleX(0.87);">451</div>
<div class="t " style="left:23px;top:228.5px;font-size:11px;line-height:16px;height:16px;color:#111;width:59px;text-align:center;font-weight:bold;">周二</div>
<div class="t " style="left:82px;top:228.8px;font-size:12.3px;line-height:16px;height:16px;color:#2e2e2e;width:59.5px;text-align:center;transform:scaleX(0.87);">632</div>
<div class="t " style="left:141.5px;top:228.8px;font-size:12.3px;line-height:16px;height:16px;color:#2e2e2e;width:59px;text-align:center;transform:scaleX(0.87);">555</div>
<div class="t " style="left:200.5px;top:228.8px;font-size:12.3px;line-height:16px;height:16px;color:#2e2e2e;width:59.5px;text-align:center;transform:scaleX(0.87);">233</div>
<div class="t " style="left:260px;top:228.8px;font-size:12.3px;line-height:16px;height:16px;color:#2e2e2e;width:59.5px;text-align:center;transform:scaleX(0.87);">555</div>
<div class="t " style="left:319.5px;top:228.8px;font-size:12.3px;line-height:16px;height:16px;color:#2e2e2e;width:57.5px;text-align:center;transform:scaleX(0.87);">231</div>
<div class="t " style="left:23px;top:253.2px;font-size:11px;line-height:16px;height:16px;color:#111;width:59px;text-align:center;font-weight:bold;">周三</div>
<div class="t " style="left:82px;top:253.5px;font-size:12.3px;line-height:16px;height:16px;color:#2e2e2e;width:59.5px;text-align:center;transform:scaleX(0.87);">555</div>
<div class="t " style="left:141.5px;top:253.5px;font-size:12.3px;line-height:16px;height:16px;color:#2e2e2e;width:59px;text-align:center;transform:scaleX(0.87);">233</div>
<div class="t " style="left:200.5px;top:253.5px;font-size:12.3px;line-height:16px;height:16px;color:#2e2e2e;width:59.5px;text-align:center;transform:scaleX(0.87);">632</div>
<div class="t " style="left:260px;top:253.5px;font-size:12.3px;line-height:16px;height:16px;color:#2e2e2e;width:59.5px;text-align:center;transform:scaleX(0.87);">233</div>
<div class="t " style="left:319.5px;top:253.5px;font-size:12.3px;line-height:16px;height:16px;color:#2e2e2e;width:57.5px;text-align:center;transform:scaleX(0.87);">661</div>
<div class="t " style="left:23px;top:277.9px;font-size:11px;line-height:16px;height:16px;color:#111;width:59px;text-align:center;font-weight:bold;">周四</div>
<div class="t " style="left:82px;top:278.2px;font-size:12.3px;line-height:16px;height:16px;color:#2e2e2e;width:59.5px;text-align:center;transform:scaleX(0.87);">662</div>
<div class="t " style="left:141.5px;top:278.2px;font-size:12.3px;line-height:16px;height:16px;color:#2e2e2e;width:59px;text-align:center;transform:scaleX(0.87);">565</div>
<div class="t " style="left:200.5px;top:278.2px;font-size:12.3px;line-height:16px;height:16px;color:#2e2e2e;width:59.5px;text-align:center;transform:scaleX(0.87);">454</div>
<div class="t " style="left:260px;top:278.2px;font-size:12.3px;line-height:16px;height:16px;color:#2e2e2e;width:59.5px;text-align:center;transform:scaleX(0.87);">965</div>
<div class="t " style="left:319.5px;top:278.2px;font-size:12.3px;line-height:16px;height:16px;color:#2e2e2e;width:57.5px;text-align:center;transform:scaleX(0.87);">451</div>
<div class="t " style="left:23px;top:302.6px;font-size:11px;line-height:16px;height:16px;color:#111;width:59px;text-align:center;font-weight:bold;">周五</div>
<div class="t " style="left:82px;top:302.9px;font-size:12.3px;line-height:16px;height:16px;color:#2e2e2e;width:59.5px;text-align:center;transform:scaleX(0.87);">775</div>
<div class="t " style="left:141.5px;top:302.9px;font-size:12.3px;line-height:16px;height:16px;color:#2e2e2e;width:59px;text-align:center;transform:scaleX(0.87);">788</div>
<div class="t " style="left:200.5px;top:302.9px;font-size:12.3px;line-height:16px;height:16px;color:#2e2e2e;width:59.5px;text-align:center;transform:scaleX(0.87);">965</div>
<div class="t " style="left:260px;top:302.9px;font-size:12.3px;line-height:16px;height:16px;color:#2e2e2e;width:59.5px;text-align:center;transform:scaleX(0.87);">454</div>
<div class="t " style="left:319.5px;top:302.9px;font-size:12.3px;line-height:16px;height:16px;color:#2e2e2e;width:57.5px;text-align:center;transform:scaleX(0.87);">631</div>
<div class="t " style="left:23px;top:327.3px;font-size:11px;line-height:16px;height:16px;color:#111;width:59px;text-align:center;font-weight:bold;">周六</div>
<div class="t " style="left:82px;top:327.6px;font-size:12.3px;line-height:16px;height:16px;color:#2e2e2e;width:59.5px;text-align:center;transform:scaleX(0.87);">965</div>
<div class="t " style="left:141.5px;top:327.6px;font-size:12.3px;line-height:16px;height:16px;color:#2e2e2e;width:59px;text-align:center;transform:scaleX(0.87);">998</div>
<div class="t " style="left:200.5px;top:327.6px;font-size:12.3px;line-height:16px;height:16px;color:#2e2e2e;width:59.5px;text-align:center;transform:scaleX(0.87);">669</div>
<div class="t " style="left:260px;top:327.6px;font-size:12.3px;line-height:16px;height:16px;color:#2e2e2e;width:59.5px;text-align:center;transform:scaleX(0.87);">454</div>
<div class="t " style="left:319.5px;top:327.6px;font-size:12.3px;line-height:16px;height:16px;color:#2e2e2e;width:57.5px;text-align:center;transform:scaleX(0.87);">961</div>
<div class="t " style="left:23px;top:352px;font-size:11px;line-height:16px;height:16px;color:#111;width:59px;text-align:center;font-weight:bold;">周日</div>
<div class="t " style="left:82px;top:352.3px;font-size:12.3px;line-height:16px;height:16px;color:#2e2e2e;width:59.5px;text-align:center;transform:scaleX(0.87);">669</div>
<div class="t " style="left:141.5px;top:352.3px;font-size:12.3px;line-height:16px;height:16px;color:#2e2e2e;width:59px;text-align:center;transform:scaleX(0.87);">454</div>
<div class="t " style="left:200.5px;top:352.3px;font-size:12.3px;line-height:16px;height:16px;color:#2e2e2e;width:59.5px;text-align:center;transform:scaleX(0.87);">889</div>
<div class="t " style="left:260px;top:352.3px;font-size:12.3px;line-height:16px;height:16px;color:#2e2e2e;width:59.5px;text-align:center;transform:scaleX(0.87);">351</div>
<div class="t " style="left:319.5px;top:352.3px;font-size:12.3px;line-height:16px;height:16px;color:#2e2e2e;width:57.5px;text-align:center;transform:scaleX(0.87);">231</div>
<div class="t " style="left:23px;top:376.7px;font-size:11px;line-height:16px;height:16px;color:#111;width:59px;text-align:center;font-weight:bold;">备注</div>
<div class="b " style="left:21.5px;top:173px;width:356.5px;height:1.5px;background:#35835a;"></div>
<div class="b " style="left:21.6px;top:173px;width:1.6px;height:223.5px;background:#2a7a50;"></div>
<div class="b " style="left:21.5px;top:395px;width:356.5px;height:1.6px;background:#217346;"></div>
<div class="b " style="left:376.3px;top:173px;width:1.6px;height:223px;background:#217346;"></div>
<div class="b " style="left:376px;top:393px;width:5px;height:5px;background:#fff;"></div>
<div class="b " style="left:377px;top:394px;width:3.5px;height:3.5px;background:#217346;"></div>
<div class="b " style="left:622.6px;top:160px;width:17.4px;height:252.5px;background:#e4e4e4;"></div>
<div class="b " style="left:622.2px;top:174px;width:0.9px;height:238px;background:#9a9f9c;"></div>
<div class="b " style="left:624px;top:174px;width:14.5px;height:238px;background:#dcdcdc;"></div>
<div class="b " style="left:625.8px;top:161.3px;width:11.2px;height:12px;background:#fff;border:1px solid #c6c6c6;"></div>
<svg class="i" style="left:628.6px;top:165.4px;" width="5.6" height="3.4" viewBox="0 0 5.6 3.4"><path d="M0 3.4h5.6l-2.8-3.4z" fill="#555"/></svg>
<div class="b " style="left:625.8px;top:173.3px;width:11.2px;height:158.6px;background:#fff;border:1px solid #c6c6c6;"></div>
<div class="b " style="left:625.8px;top:401.2px;width:11.2px;height:11px;background:#fff;border:1px solid #c6c6c6;"></div>
<svg class="i" style="left:628.6px;top:405.2px;" width="5.6" height="3.4" viewBox="0 0 5.6 3.4"><path d="M0 0h5.6l-2.8 3.4z" fill="#555"/></svg>
<div class="b " style="left:0px;top:411.5px;width:640px;height:1px;background:#c9c9c9;"></div>
<svg class="i" style="left:22px;top:418px;" width="4" height="7" viewBox="0 0 4 7"><path d="M4 0v7l-4-3.5z" fill="#c3c3c3"/></svg>
<svg class="i" style="left:44px;top:418px;" width="4" height="7" viewBox="0 0 4 7"><path d="M0 0v7l4-3.5z" fill="#c3c3c3"/></svg>
<div class="b " style="left:78px;top:411px;width:52.5px;height:19.5px;background:#fff;border-bottom:1.5px solid #217346;border-left:1px solid #d0d0d0;border-right:1px solid #d0d0d0;"></div>
<div class="t " style="left:78px;top:413.6px;font-size:10.4px;line-height:15px;height:15px;color:#217346;width:52.5px;text-align:center;">Sheet1</div>
<svg class="i" style="left:156px;top:416.5px;" width="11" height="11" viewBox="0 0 11 11"><circle cx="5.5" cy="5.5" r="4.8" fill="none" stroke="#666" stroke-width="0.9"/><path d="M5.5 2.8v5.4M2.8 5.5h5.4" stroke="#666" stroke-width="0.9"/></svg>
<div class="b " style="left:560px;top:417px;width:51px;height:10.6px;background:#d8d8d8;"></div>
<div class="b " style="left:560px;top:417px;width:30.5px;height:10.6px;background:#fff;border:1px solid #c8c8c8;"></div>
<div class="b " style="left:611.2px;top:417px;width:11.5px;height:10.6px;background:#fff;border:1px solid #c6c6c6;"></div>
<svg class="i" style="left:615.6px;top:419.6px;" width="3.4" height="5.6" viewBox="0 0 3.4 5.6"><path d="M0 0v5.6l3.4-2.8z" fill="#555"/></svg>
<div class="t " style="left:193px;top:434.4px;font-size:9.5px;line-height:13px;height:13px;color:#3c3c3c;letter-spacing:-0.32px;">平均值<span style="font-size:10.07px">: 597.3142857</span></div>
<div class="t " style="left:295px;top:434.4px;font-size:9.5px;line-height:13px;height:13px;color:#3c3c3c;letter-spacing:-0.32px;">计数<span style="font-size:10.07px">: 48</span></div>
<div class="t " style="left:342px;top:434.4px;font-size:9.5px;line-height:13px;height:13px;color:#3c3c3c;width:11px;overflow:hidden;">求和: 28671</div>
<div class="t " style="left:584.2px;top:434.2px;font-size:11.5px;line-height:14px;height:14px;color:#444;">+</div>
<div class="t " style="left:600.8px;top:435.4px;font-size:9.9px;line-height:13px;height:13px;color:#3c3c3c;letter-spacing:-0.35px;">100%</div>
<div class="b " style="left:573.4px;top:441.2px;width:8.8px;height:1px;background:#b4b4b4;"></div>
<div class="b " style="left:351.8px;top:31.8px;width:139.2px;height:359.8px;background:#fbfbfb;border:1px solid #d2d2d2;box-shadow:1.5px 1.5px 3px rgba(0,0,0,0.26);"></div>
<svg class="i" style="left:358px;top:36.5px;" width="10.23" height="10.695" viewBox="0 0 11 11.5"><path d="M1.7 0.2L7.9 8.0M9.3 0.2L3.1 8.0" stroke="#3c3c3c" stroke-width="1.45" fill="none"/><circle cx="2.5" cy="9.3" r="1.85" fill="none" stroke="#3f6fc0" stroke-width="1.2"/><circle cx="8.5" cy="9.3" r="1.85" fill="none" stroke="#3f6fc0" stroke-width="1.2"/></svg>
<div class="t " style="left:379.2px;top:35.5px;font-size:9.4px;line-height:13px;height:13px;color:#444;letter-spacing:-0.3px;">剪切<span style="font-size:9.12px">(<u>T</u>)</span></div>
<div class="b " style="left:353.5px;top:51.3px;width:68px;height:21.6px;background:#fdfdfd;border:2.2px solid #9fc631;"></div>
<svg class="i" style="left:357.8px;top:56.4px;" width="11" height="10.12" viewBox="0 0 12.5 11.5"><path d="M0.6 0.6h5.2v7.6h-5.2z" fill="#fff" stroke="#5a5a5a" stroke-width="0.9"/><path d="M1.8 2.6h2.6M1.8 4.4h2.6" stroke="#3f6fc0" stroke-width="0.8"/><path d="M4.6 3.4h4.6l2.6 2.6v5h-7.2z" fill="#fff" stroke="#5a5a5a" stroke-width="0.9"/><path d="M9.2 3.4v2.6h2.6" fill="none" stroke="#5a5a5a" stroke-width="0.8"/><path d="M6.2 7.4h3.8M6.2 9.2h3.8" stroke="#3f6fc0" stroke-width="0.8"/></svg>
<div class="t " style="left:379.2px;top:55.1px;font-size:9.4px;line-height:13px;height:13px;color:#444;letter-spacing:-0.3px;">复制<span style="font-size:9.12px">(<u>C</u>)</span></div>
<div class="b " style="left:373px;top:72.9px;width:117.5px;height:16.4px;background:#e5e5e5;"></div>
<svg class="i" style="left:358.6px;top:74px;" width="10.4" height="12" viewBox="0 0 21.5 26"><rect x="0.3" y="5.6" width="17.2" height="17.6" rx="0.8" fill="#cfcfcf"/><path d="M4.6 7v-2.6h2.6a1.9 1.9 0 0 1 3.6 0h2.6v2.6z" fill="#bdbdbd"/><circle cx="9" cy="3.6" r="0.8" fill="#cfcfcf"/><path d="M11.4 9.8h6.2l3.6 3.6v10.8h-9.8z" fill="#fff" stroke="#b5b5b5" stroke-width="0.9"/><path d="M17.6 9.8v3.6h3.6" fill="none" stroke="#b5b5b5" stroke-width="0.9"/></svg>
<div class="t " style="left:379.2px;top:74.3px;font-size:9.4px;line-height:13px;height:13px;color:#484848;font-weight:bold;letter-spacing:-0.3px;">粘贴选项<span style="font-size:9.12px">:</span></div>
<svg class="i" style="left:377.2px;top:91.8px;" width="17" height="19.8" viewBox="0 0 21.5 26"><rect x="0.3" y="5.6" width="17.2" height="17.6" rx="0.8" fill="#dadada"/><path d="M4.6 7v-2.6h2.6a1.9 1.9 0 0 1 3.6 0h2.6v2.6z" fill="#c6c6c6"/><circle cx="9" cy="3.6" r="0.8" fill="#dadada"/><path d="M11.4 9.8h6.2l3.6 3.6v10.8h-9.8z" fill="#fff" stroke="#c2c2c2" stroke-width="0.9"/><path d="M17.6 9.8v3.6h3.6" fill="none" stroke="#c2c2c2" stroke-width="0.9"/></svg>
<div class="t " style="left:379.2px;top:116.1px;font-size:9.4px;line-height:13px;height:13px;color:#c0c0c0;letter-spacing:-0.3px;">选择性粘贴<span style="font-size:9.12px">(<u>S</u>)...</span></div>
<div class="b " style="left:378.5px;top:132.5px;width:111px;height:1px;background:#e1e1e1;"></div>
<svg class="i" style="left:357.4px;top:136.4px;" width="12.4" height="12.6" viewBox="0 0 12.4 12.6"><circle cx="7.3" cy="5" r="4.3" fill="none" stroke="#3f6fc0" stroke-width="1.3"/><path d="M4.2 8.2l-3.6 3.8" stroke="#3f6fc0" stroke-width="1.7"/><circle cx="7.3" cy="3" r="0.75" fill="#333"/><path d="M7.3 4.4v2.8" stroke="#333" stroke-width="1.2"/></svg>
<div class="t " style="left:379.2px;top:137.1px;font-size:9.4px;line-height:13px;height:13px;color:#444;letter-spacing:-0.3px;">智能查找<span style="font-size:9.12px">(<u>L</u>)</span></div>
<div class="b " style="left:378.5px;top:153.5px;width:111px;height:1px;background:#e1e1e1;"></div>
<div class="t " style="left:379.2px;top:157.6px;font-size:9.4px;line-height:13px;height:13px;color:#444;letter-spacing:-0.3px;">插入<span style="font-size:9.12px">(<u>I</u>)...</span></div>
<div class="t " style="left:379.2px;top:177.1px;font-size:9.4px;line-height:13px;height:13px;color:#444;letter-spacing:-0.3px;">删除<span style="font-size:9.12px">(<u>D</u>)...</span></div>
<div class="t " style="left:379.2px;top:196.3px;font-size:9.4px;line-height:13px;height:13px;color:#444;letter-spacing:-0.3px;">清除内容<span style="font-size:9.12px">(<u>N</u>)</span></div>
<div class="b " style="left:378.5px;top:212px;width:111px;height:1px;background:#e1e1e1;"></div>
<svg class="i" style="left:358px;top:217.2px;" width="11.4" height="11.8" viewBox="0 0 11.4 11.8"><path d="M2.6 0.6h8.2v10.6h-8.2z" fill="#f4f4f4" stroke="#c4c4c4" stroke-width="0.9"/><path d="M4.4 3.2h4.8M4.4 5.6h4.8M4.4 8h4.8" stroke="#c9c9c9" stroke-width="0.9"/><path d="M3 2.6l-2.4 4.2h1.8l-1.2 3.6" stroke="#bdbdbd" stroke-width="0.9" fill="none"/></svg>
<div class="t " style="left:379.2px;top:217.6px;font-size:9.4px;line-height:13px;height:13px;color:#c0c0c0;letter-spacing:-0.3px;">快速分析<span style="font-size:9.12px">(<u>Q</u>)</span></div>
<div class="t " style="left:379.2px;top:236.3px;font-size:9.4px;line-height:13px;height:13px;color:#444;letter-spacing:-0.3px;">筛选<span style="font-size:9.12px">(<u>E</u>)</span></div>
<svg class="i" style="left:479.5px;top:240.4px;" width="3.4" height="5.6" viewBox="0 0 3.4 5.6"><path d="M0 0v5.6l3.2-2.8z" fill="#444"/></svg>
<div class="t " style="left:379.2px;top:255.7px;font-size:9.4px;line-height:13px;height:13px;color:#444;letter-spacing:-0.3px;">排序<span style="font-size:9.12px">(<u>O</u>)</span></div>
<svg class="i" style="left:479.5px;top:259.8px;" width="3.4" height="5.6" viewBox="0 0 3.4 5.6"><path d="M0 0v5.6l3.2-2.8z" fill="#444"/></svg>
<div class="b " style="left:378.5px;top:271.5px;width:111px;height:1px;background:#e1e1e1;"></div>
<svg class="i" style="left:357.6px;top:276.6px;" width="11.8" height="10.8" viewBox="0 0 11.8 10.8"><path d="M4.4 1.4h6.8v6h-6.2l-2 2.4v-2.4h-1.2v-3.4" fill="none" stroke="#666" stroke-width="0.9"/><path d="M1.8 0v3.6M0 1.8h3.6" stroke="#2e8b57" stroke-width="1"/></svg>
<div class="t " style="left:379.2px;top:276.1px;font-size:9.4px;line-height:13px;height:13px;color:#444;letter-spacing:-0.3px;">插入批注<span style="font-size:9.12px">(<u>M</u>)</span></div>
<div class="b " style="left:378.5px;top:292px;width:111px;height:1px;background:#e1e1e1;"></div>
<svg class="i" style="left:358.3px;top:297.3px;" width="10.8" height="11.8" viewBox="0 0 10.8 11.8"><rect x="0.5" y="0.5" width="9.8" height="10.8" fill="#fff" stroke="#5a5a5a" stroke-width="0.9"/><rect x="0.5" y="0.5" width="9.8" height="2.2" fill="#3f6fc0"/><path d="M2.4 5.2h1.6M5.4 5.2h3M2.4 8.2h1.6M5.4 8.2h3" stroke="#555" stroke-width="1.1"/></svg>
<div class="t " style="left:379.2px;top:297.1px;font-size:9.4px;line-height:13px;height:13px;color:#444;letter-spacing:-0.3px;">设置单元格格式<span style="font-size:9.12px">(<u>F</u>)...</span></div>
<div class="t " style="left:379.2px;top:317.3px;font-size:9.4px;line-height:13px;height:13px;color:#444;letter-spacing:-0.3px;">从下拉列表中选择<span style="font-size:9.12px">(<u>K</u>)...</span></div>
<div class="t " style="left:357.4px;top:335.4px;font-size:7px;line-height:8px;height:8px;color:#333;width:13px;text-align:center;-webkit-text-stroke:0.2px #333;letter-spacing:-0.1px;">wén</div>
<div class="t " style="left:357.4px;top:342.4px;font-size:6.2px;line-height:8px;height:8px;color:#3f6fc0;width:13px;text-align:center;font-weight:bold;">文</div>
<div class="t " style="left:379.2px;top:335.7px;font-size:9.4px;line-height:13px;height:13px;color:#444;letter-spacing:-0.3px;">显示拼音字段<span style="font-size:9.12px">(<u>S</u>)</span></div>
<div class="t " style="left:379.2px;top:354.7px;font-size:9.4px;line-height:13px;height:13px;color:#444;letter-spacing:-0.3px;">定义名称<span style="font-size:9.12px">(<u>A</u>)...</span></div>
<svg class="i" style="left:357.6px;top:375px;" width="12.4" height="11" viewBox="0 0 12.4 11"><ellipse cx="6.2" cy="3.4" rx="4" ry="2.9" fill="none" stroke="#777" stroke-width="0.9"/><path d="M2.2 3.4h8M6.2 0.5v5.8" stroke="#777" stroke-width="0.7"/><rect x="0.7" y="6.2" width="6" height="4" rx="2" fill="none" stroke="#2f62b8" stroke-width="1.3"/><rect x="5.7" y="6.2" width="6" height="4" rx="2" fill="none" stroke="#2f62b8" stroke-width="1.3"/></svg>
<div class="t " style="left:379.2px;top:374.3px;font-size:9.4px;line-height:13px;height:13px;color:#444;letter-spacing:-0.3px;">链接<span style="font-size:9.12px">(<u>I</u>)</span></div>
<div class="b " style="left:407px;top:447.2px;width:29px;height:2.2px;background:#b4b4b4;"></div>
<div class="b " style="left:352.7px;top:403px;width:219.6px;height:43.4px;background:#fafafa;border:1px solid #c8c8c8;box-shadow:1px 1px 2.5px rgba(0,0,0,0.22);"></div>
<div class="b " style="left:356.3px;top:406.6px;width:58px;height:18.2px;background:#fff;border:1px solid #c9c9c9;"></div>
<div class="b " style="left:413.8px;top:406.6px;width:45px;height:18.2px;background:#fff;border:1px solid #c9c9c9;"></div>
<div class="t " style="left:358px;top:409.8px;font-size:9.5px;line-height:12px;height:12px;color:#444;">等线</div>
<svg class="i" style="left:401px;top:413.2px;" width="10.4" height="5.6" viewBox="0 0 10.4 5.6"><path d="M0.4 0.4l4.8 4.8l4.8 -4.8" stroke="#444" stroke-width="1.1" fill="none"/></svg>
<div class="t " style="left:418px;top:409.8px;font-size:9.5px;line-height:12px;height:12px;color:#444;">11</div>
<svg class="i" style="left:445.4px;top:413.2px;" width="10.4" height="5.6" viewBox="0 0 10.4 5.6"><path d="M0.4 0.4l4.8 4.8l4.8 -4.8" stroke="#444" stroke-width="1.1" fill="none"/></svg>
<div class="t " style="left:463.8px;top:410.8px;font-size:10.5px;line-height:10px;height:10px;color:#3a3a3a;-webkit-text-stroke:0.2px #3a3a3a;">A</div>
<svg class="i" style="left:470px;top:410.2px;" width="3.4" height="2.2" viewBox="0 0 3.4 2.2"><path d="M0 2.2h3.4l-1.7-2.2z" fill="#444"/></svg>
<div class="t " style="left:481.2px;top:412.4px;font-size:9.2px;line-height:9px;height:9px;color:#3a3a3a;-webkit-text-stroke:0.2px #3a3a3a;">A</div>
<svg class="i" style="left:487px;top:410px;" width="3.4" height="2.2" viewBox="0 0 3.4 2.2"><path d="M0 0h3.4l-1.7 2.2z" fill="#444"/></svg>
<svg class="i" style="left:495px;top:409.4px;" width="13.2" height="12.3" viewBox="0 0 13.2 12.3"><rect x="0.7" y="0.7" width="11.8" height="6.6" fill="#e3eefb" stroke="#3f78c8" stroke-width="1.3"/><rect x="0.2" y="0.2" width="12.8" height="1.6" fill="#3f78c8"/><ellipse cx="6.6" cy="4.4" rx="2.2" ry="1.8" fill="#5a8fd6"/><ellipse cx="8" cy="8.6" rx="3.4" ry="1.3" fill="#ecd3a0" stroke="#c9a15a" stroke-width="0.5"/><ellipse cx="8" cy="10.6" rx="3.4" ry="1.3" fill="#ecd3a0" stroke="#c9a15a" stroke-width="0.5"/></svg>
<svg class="i" style="left:512px;top:413.6px;" width="4" height="2.4" viewBox="0 0 4 2.4"><path d="M0 0h4l-2 2.4z" fill="#555"/></svg>
<div class="t " style="left:523px;top:409.4px;font-size:11.2px;line-height:12px;height:12px;color:#383838;">%</div>
<div class="t " style="left:541.4px;top:404.6px;font-size:14px;line-height:14px;height:14px;color:#444;font-weight:bold;">,</div>
<div class="b " style="left:552.7px;top:406.2px;width:17.2px;height:18.2px;background:#c6c6c6;"></div>
<svg class="i" style="left:555.2px;top:409px;" width="11.8" height="11.8" viewBox="0 0 11.8 11.8"><rect x="0.5" y="0.5" width="10.8" height="10.8" fill="#fff" stroke="#686868" stroke-width="0.85"/><path d="M5.9 0.5v2.6M5.9 8.7v2.6" stroke="#686868" stroke-width="0.8"/><rect x="0.9" y="3.3" width="10" height="5.2" fill="#d6e4f7"/><path d="M0.5 3.2h10.8M0.5 8.6h10.8" stroke="#686868" stroke-width="0.7"/><path d="M2.2 5.9h7.4M2.2 5.9l1.4-1.3M2.2 5.9l1.4 1.3M9.6 5.9l-1.4-1.3M9.6 5.9l-1.4 1.3" stroke="#3f6fc0" stroke-width="0.8" fill="none"/></svg>
<div class="b " style="left:356.3px;top:424.8px;width:16.8px;height:18.2px;background:#c6c6c6;"></div>
<div class="t " style="left:356.3px;top:427.6px;font-size:9.5px;line-height:12px;height:12px;color:#333;width:16.8px;text-align:center;font-weight:bold;">B</div>
<div class="t si sb" style="left:374.5px;top:427.6px;font-size:10px;line-height:12px;height:12px;color:#333;width:14px;text-align:center;">I</div>
<div class="b " style="left:390px;top:424.8px;width:16.6px;height:18.2px;background:#c6c6c6;"></div>
<svg class="i" style="left:392.8px;top:424px;" width="14" height="14" viewBox="0 0 14 14"><path d="M0 6.3h11M2 9.2h7M0 12.1h11" stroke="#6a6a6a" stroke-width="0.85" fill="none"/></svg>
<svg class="i" style="left:408.4px;top:427.2px;" width="13" height="12.6" viewBox="0 0 13 12.6"><path d="M2.6 4.6l4.2-3.8l4.6 4.6l-4.6 3.4z" fill="#fff" stroke="#484848" stroke-width="1.05" stroke-linejoin="round"/><path d="M4.4 3.0c-0.9-2.0 1.0-3.4 2.6-1.8" fill="none" stroke="#484848" stroke-width="0.9"/><path d="M11.7 5.6c1.2 1.5 1.5 2.6 0.7 3.1c-0.9 0.4-1.5-0.7-0.7-3.1z" fill="#3f6fc0"/><rect x="0" y="9.1" width="13" height="3.4" fill="#ffee00"/></svg>
<svg class="i" style="left:426.4px;top:432.2px;" width="4" height="2.4" viewBox="0 0 4 2.4"><path d="M0 0h4l-2 2.4z" fill="#555"/></svg>
<div class="t " style="left:437.9px;top:427.4px;font-size:10.5px;line-height:10px;height:10px;color:#3a3a3a;-webkit-text-stroke:0.3px #3a3a3a;">A</div>
<div class="b " style="left:435px;top:436.6px;width:12.6px;height:3.2px;background:#e8202a;"></div>
<svg class="i" style="left:452.4px;top:432.2px;" width="4" height="2.4" viewBox="0 0 4 2.4"><path d="M0 0h4l-2 2.4z" fill="#555"/></svg>
<svg class="i" style="left:462.3px;top:429.2px;" width="10" height="10" viewBox="0 0 10 10"><path d="M0.5 0.5h9v9h-9zM5 0.5v9M0.5 5h9" stroke="#a6a6a6" stroke-width="0.9" fill="none"/></svg>
<svg class="i" style="left:478.4px;top:432.2px;" width="4" height="2.4" viewBox="0 0 4 2.4"><path d="M0 0h4l-2 2.4z" fill="#555"/></svg>
<svg class="i" style="left:487.8px;top:428.6px;" width="11.4" height="10.6" viewBox="0 0 11.4 10.6"><path d="M0.4 2.8h4.4M0.5 2.8l2-2M0.5 2.8l2 2" stroke="#3f66a8" stroke-width="1.0" fill="none"/><text x="5.8" y="4.3" font-size="5.9" fill="#2e2e2e" style="font-family:&quot;Liberation Sans&quot;,sans-serif">.0</text><text x="2.5" y="10.2" font-size="5.9" fill="#2e2e2e" style="font-family:&quot;Liberation Sans&quot;,sans-serif">.00</text></svg>
<svg class="i" style="left:504px;top:428.6px;" width="11.4" height="10.6" viewBox="0 0 11.4 10.6"><text x="2.7" y="4.3" font-size="5.9" fill="#2e2e2e" style="font-family:&quot;Liberation Sans&quot;,sans-serif">.00</text><path d="M0.2 8.2h4.4M4.7 8.2l-2-2M4.7 8.2l-2 2" stroke="#3f66a8" stroke-width="1.0" fill="none"/><text x="6" y="10.2" font-size="5.9" fill="#2e2e2e" style="font-family:&quot;Liberation Sans&quot;,sans-serif">.0</text></svg>
<svg class="i" style="left:522.4px;top:428.2px;" width="12" height="11.5" viewBox="0 0 12 11.5"><path d="M11 1l-2.2 2.2" stroke="#3c3c3c" stroke-width="2.2" stroke-linecap="round"/><path d="M6.6 2.2l3.4 3.4l-1.5 1.5l-3.4-3.4z" fill="#4a4a4a"/><path d="M4.6 4.2l3.4 3.4l-4 3.8h-2l-1.7-2.6z" fill="#ecc98c"/><path d="M2.4 8.6l1.5 1.5M1.5 7.6l0.8 0.8" stroke="#c9a15a" stroke-width="0.6"/></svg>
<div class="b " style="left:0px;top:49px;width:1.3px;height:402px;background:#217346;"></div>
<div class="b " style="left:639px;top:49px;width:1px;height:402px;background:#7aa890;"></div>
<div class="b " style="left:0px;top:449.5px;width:640px;height:1.5px;background:#217346;"></div>
</div>
</body></html>
